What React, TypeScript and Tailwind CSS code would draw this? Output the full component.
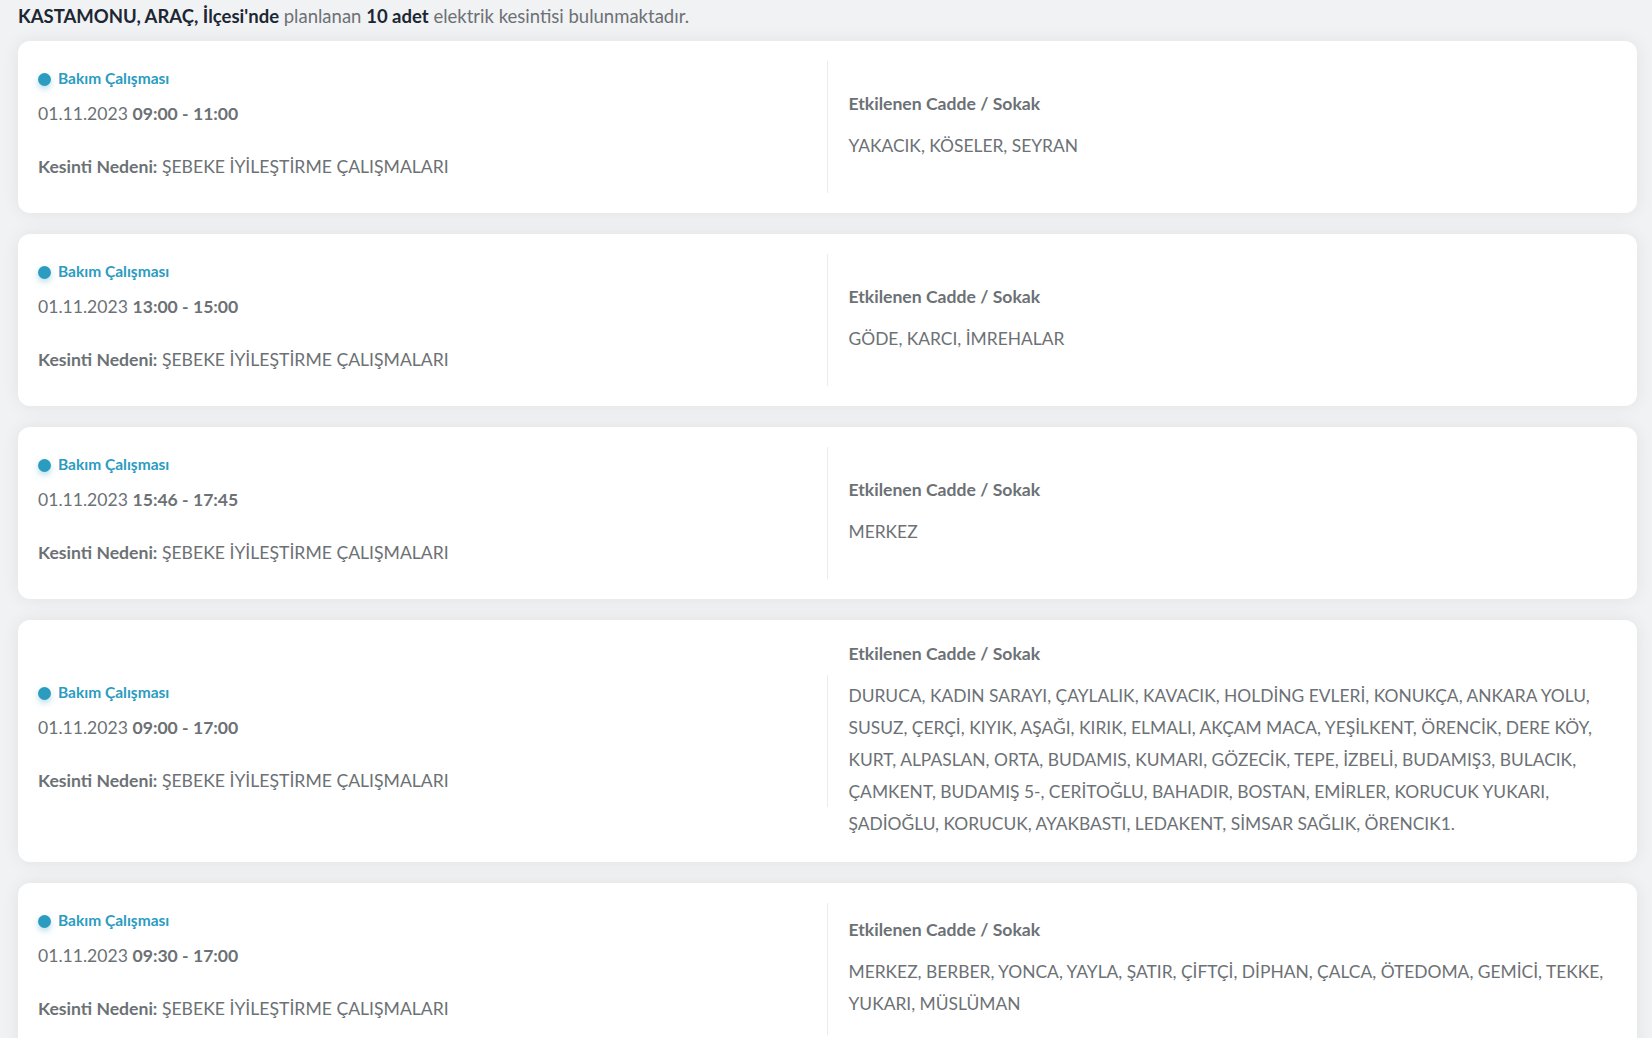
const outages = [
  { time: '09:00 - 11:00', streets: 'YAKACIK, KÖSELER, SEYRAN' },
  { time: '13:00 - 15:00', streets: 'GÖDE, KARCI, İMREHALAR' },
  { time: '15:46 - 17:45', streets: 'MERKEZ' },
  {
    time: '09:00 - 17:00',
    streets:
      'DURUCA, KADIN SARAYI, ÇAYLALIK, KAVACIK, HOLDİNG EVLERİ, KONUKÇA, ANKARA YOLU, SUSUZ, ÇERÇİ, KIYIK, AŞAĞI, KIRIK, ELMALI, AKÇAM MACA, YEŞİLKENT, ÖRENCİK, DERE KÖY, KURT, ALPASLAN, ORTA, BUDAMIS, KUMARI, GÖZECİK, TEPE, İZBELİ, BUDAMIŞ3, BULACIK, ÇAMKENT, BUDAMIŞ 5-, CERİTOĞLU, BAHADIR, BOSTAN, EMİRLER, KORUCUK YUKARI, ŞADİOĞLU, KORUCUK, AYAKBASTI, LEDAKENT, SİMSAR SAĞLIK, ÖRENCIK1.',
  },
  {
    time: '09:30 - 17:00',
    streets: 'MERKEZ, BERBER, YONCA, YAYLA, ŞATIR, ÇİFTÇİ, DİPHAN, ÇALCA, ÖTEDOMA, GEMİCİ, TEKKE, YUKARI, MÜSLÜMAN',
  },
]

function OutageCard({ time, streets }: { time: string; streets: string }) {
  return (
    <div className="flex items-center rounded-[12px] bg-white py-5 shadow-[0_0_18px_rgba(0,0,0,0.07)]">
      <div className="flex h-[132px] w-1/2 flex-col border-r border-[#ececec] pl-5 pt-[8px]">
        <div className="flex h-5 items-center gap-[7px]">
          <span className="h-[13px] w-[13px] rounded-full bg-[#2b9cbf] shadow-[0_3px_6px_rgba(43,156,191,0.35)]" />
          <span className="text-[15.5px] font-bold text-[#2b9cbf]">Bakım Çalışması</span>
        </div>
        <div className="mt-[13px] text-[17.6px] leading-6 text-[#6c7175]">
          <span>01.11.2023</span> <span className="font-bold">{time}</span>
        </div>
        <div className="mt-[29px] text-[17.6px] leading-6 text-[#6c7175]">
          <span className="font-bold">Kesinti Nedeni:</span> <span>ŞEBEKE İYİLEŞTİRME ÇALIŞMALARI</span>
        </div>
      </div>
      <div className="w-1/2 py-[2px] pl-[21px] pr-[27px]">
        <div className="text-[17.6px] font-bold leading-6 text-[#6c7175]">Etkilenen Cadde / Sokak</div>
        <p className="mt-[14px] text-[17.4px] leading-8 text-[#6c7175]">{streets}</p>
      </div>
    </div>
  )
}

export default function App() {
  return (
    <div className="min-h-screen bg-[#f1f2f4] pl-[18px] pr-[15px] pt-1 font-['Lato',sans-serif]">
      <div className="text-[18.5px] leading-6 text-[#6c7175]">
        <span className="font-bold text-[#1c2733]">KASTAMONU, ARAÇ, İlçesi'nde</span> planlanan{' '}
        <span className="font-bold text-[#1c2733]">10 adet</span> elektrik kesintisi bulunmaktadır.
      </div>
      <div className="mt-[13px] flex flex-col gap-[21px] pb-6">
        {outages.map((o, i) => (
          <OutageCard key={i} time={o.time} streets={o.streets} />
        ))}
      </div>
    </div>
  )
}
